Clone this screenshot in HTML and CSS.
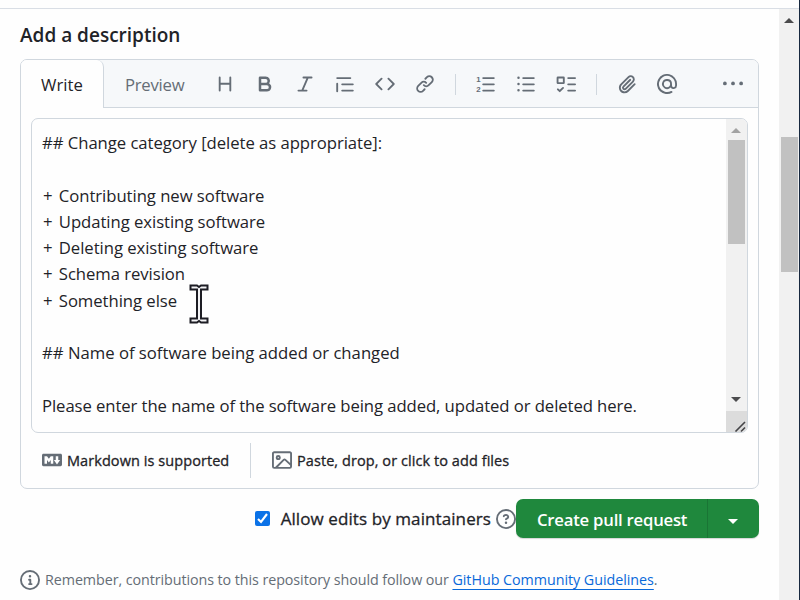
FILE: index.html
```html
<!DOCTYPE html>
<html lang="en">
<head>
<meta charset="utf-8">
<title>Open a pull request</title>
<link rel="stylesheet" href="styles.css">
</head>
<body>
<div class="page">
  <main class="content">
    <h3 class="title"><span>Add a description</span></h3>
    <section class="editor">
      <div class="tabbar">
        <div class="tab tab-active"><span class="t-write">Write</span></div>
        <div class="tab tab-preview"><span class="t-preview">Preview</span></div>
        <div class="tools">
          <svg class="ico" viewBox="0 0 16 16"><path d="M3.75 2a.75.75 0 0 1 .75.75V7h7V2.75a.75.75 0 0 1 1.5 0v10.5a.75.75 0 0 1-1.5 0V8.5h-7v4.75a.75.75 0 0 1-1.5 0V2.75A.75.75 0 0 1 3.75 2Z"/></svg>
          <svg class="ico" viewBox="0 0 16 16"><path d="M4 2h4.5a3.501 3.501 0 0 1 2.852 5.53A3.499 3.499 0 0 1 9.5 14H4a1 1 0 0 1-1-1V3a1 1 0 0 1 1-1Zm1 7v3h4.5a1.5 1.5 0 0 0 0-3Zm3.5-2a1.5 1.5 0 0 0 0-3H5v3Z"/></svg>
          <svg class="ico" viewBox="0 0 16 16"><path d="M6 2.75A.75.75 0 0 1 6.75 2h6.5a.75.75 0 0 1 0 1.5h-2.505l-3.858 9H9.25a.75.75 0 0 1 0 1.5h-6.5a.75.75 0 0 1 0-1.5h2.505l3.858-9H6.75A.75.75 0 0 1 6 2.75Z"/></svg>
          <svg class="ico" viewBox="0 0 16 16"><path d="M1.75 2.5h10.5a.75.75 0 0 1 0 1.5H1.75a.75.75 0 0 1 0-1.5Zm4 5h8.5a.75.75 0 0 1 0 1.5h-8.5a.75.75 0 0 1 0-1.5Zm0 5h8.5a.75.75 0 0 1 0 1.5h-8.5a.75.75 0 0 1 0-1.5ZM2.5 7.75v6a.75.75 0 0 1-1.5 0v-6a.75.75 0 0 1 1.5 0Z"/></svg>
          <svg class="ico" viewBox="0 0 16 16"><path d="m11.28 3.22 4.25 4.25a.75.75 0 0 1 0 1.06l-4.25 4.25a.749.749 0 0 1-1.275-.326.749.749 0 0 1 .215-.734L13.94 8l-3.72-3.72a.749.749 0 0 1 .326-1.275.749.749 0 0 1 .734.215Zm-6.56 0a.751.751 0 0 1 1.042.018.751.751 0 0 1 .018 1.042L2.06 8l3.72 3.72a.749.749 0 0 1-.326 1.275.749.749 0 0 1-.734-.215L.47 8.53a.75.75 0 0 1 0-1.06Z"/></svg>
          <svg class="ico" viewBox="0 0 16 16"><path d="m7.775 3.275 1.25-1.25a3.5 3.5 0 1 1 4.95 4.95l-2.5 2.5a3.5 3.5 0 0 1-4.95 0 .751.751 0 0 1 .018-1.042.751.751 0 0 1 1.042-.018 1.998 1.998 0 0 0 2.83 0l2.5-2.5a2.002 2.002 0 0 0-2.83-2.83l-1.25 1.25a.751.751 0 0 1-1.042-.018.751.751 0 0 1-.018-1.042Zm-4.69 9.64a1.998 1.998 0 0 0 2.83 0l1.25-1.25a.751.751 0 0 1 1.042.018.751.751 0 0 1 .018 1.042l-1.25 1.25a3.5 3.5 0 1 1-4.95-4.95l2.5-2.5a3.5 3.5 0 0 1 4.95 0 .751.751 0 0 1-.018 1.042.751.751 0 0 1-1.042.018 1.998 1.998 0 0 0-2.83 0l-2.5 2.5a1.998 1.998 0 0 0 0 2.83Z"/></svg>
          <i class="sep"></i>
          <svg class="ico" viewBox="0 0 16 16"><path d="M5.75 2.5h8.5a.75.75 0 0 1 0 1.5h-8.5a.75.75 0 0 1 0-1.5Zm0 5h8.5a.75.75 0 0 1 0 1.5h-8.5a.75.75 0 0 1 0-1.5Zm0 5h8.5a.75.75 0 0 1 0 1.5h-8.5a.75.75 0 0 1 0-1.5Z"/><text class="num" x="0.2" y="6.4">1</text><text class="num" x="0.2" y="14.2">2</text></svg>
          <svg class="ico" viewBox="0 0 16 16"><path d="M5.75 2.5h8.5a.75.75 0 0 1 0 1.5h-8.5a.75.75 0 0 1 0-1.5Zm0 5h8.5a.75.75 0 0 1 0 1.5h-8.5a.75.75 0 0 1 0-1.5Zm0 5h8.5a.75.75 0 0 1 0 1.5h-8.5a.75.75 0 0 1 0-1.5ZM2 14a1 1 0 1 1 0-2 1 1 0 0 1 0 2Zm1-6a1 1 0 1 1-2 0 1 1 0 0 1 2 0ZM2 4a1 1 0 1 1 0-2 1 1 0 0 1 0 2Z"/></svg>
          <svg class="ico" viewBox="0 0 16 16"><path fill-rule="evenodd" d="M1.5 2h4.5a1 1 0 0 1 1 1v4a1 1 0 0 1-1 1H1.5a1 1 0 0 1-1-1V3a1 1 0 0 1 1-1Zm.5 1.5v3h3.5v-3ZM6.155 10.595a.75.75 0 0 1 0 1.06L3.53 14.28a.75.75 0 0 1-1.06 0l-1.5-1.5a.749.749 0 0 1 .326-1.275.749.749 0 0 1 .734.215l.97.97 2.095-2.095a.75.75 0 0 1 1.06 0ZM9.75 2.5h5.5a.75.75 0 0 1 0 1.5h-5.5a.75.75 0 0 1 0-1.5Zm0 5h5.5a.75.75 0 0 1 0 1.5h-5.5a.75.75 0 0 1 0-1.5Zm0 5h5.5a.75.75 0 0 1 0 1.5h-5.5a.75.75 0 0 1 0-1.5Z"/></svg>
          <i class="sep"></i>
          <svg class="ico" viewBox="0 0 16 16"><path d="M12.212 3.02a1.753 1.753 0 0 0-2.478.003l-5.83 5.83a3.007 3.007 0 0 0-.88 2.127c0 .795.315 1.551.88 2.116.567.567 1.333.89 2.126.89.79 0 1.548-.321 2.116-.89l5.48-5.48a.75.75 0 0 1 1.061 1.06l-5.48 5.48a4.492 4.492 0 0 1-3.177 1.33c-1.2 0-2.345-.487-3.187-1.33a4.483 4.483 0 0 1-1.32-3.177c0-1.195.475-2.341 1.32-3.186l5.83-5.83a3.25 3.25 0 0 1 5.553 2.297c0 .863-.343 1.691-.953 2.301L7.439 12.39c-.375.377-.884.59-1.416.593a1.998 1.998 0 0 1-1.412-.593 1.992 1.992 0 0 1 0-2.828l5.48-5.48a.751.751 0 0 1 1.042.018.751.751 0 0 1 .018 1.042l-5.48 5.48a.492.492 0 0 0 0 .707.499.499 0 0 0 .352.154.51.51 0 0 0 .356-.154l5.833-5.827a1.755 1.755 0 0 0 0-2.481Z"/></svg>
          <svg class="ico" viewBox="0 0 16 16"><path d="M4.75 2.37a6.501 6.501 0 0 0 6.5 11.26.75.75 0 0 1 .75 1.298A7.999 7.999 0 0 1 .989 4.148 8 8 0 0 1 16 7.75v1.5a2.75 2.75 0 0 1-5.072 1.475 3.999 3.999 0 0 1-6.65-4.19A4 4 0 0 1 12 8v1.25a1.25 1.25 0 0 0 2.5 0V7.867a6.5 6.5 0 0 0-9.75-5.496ZM10.5 8a2.5 2.5 0 1 0-5 0 2.5 2.5 0 0 0 5 0Z"/></svg>
          <svg class="ico more" viewBox="0 0 16 16"><circle cx="1.5" cy="7.5" r="1.5"/><circle cx="8" cy="7.5" r="1.5"/><circle cx="14.5" cy="7.5" r="1.5"/></svg>
        </div>
      </div>
      <div class="textbox">
        <div class="lines">
          <p><span class="l1">## Change category [delete as appropriate]:</span></p>
          <p></p>
          <p><span class="item"><b>+</b> Contributing new software</span></p>
          <p><span class="item"><b>+</b> Updating existing software</span></p>
          <p><span class="item"><b>+</b> Deleting existing software</span></p>
          <p><span class="item"><b>+</b> Schema revision</span></p>
          <p><span class="item"><b>+</b> Something else</span></p>
          <p></p>
          <p><span class="l7">## Name of software being added or changed</span></p>
          <p></p>
          <p><span class="l8">Please enter the name of the software being added, updated or deleted here.</span></p>
        </div>
        <div class="scroll">
          <svg class="arrow" viewBox="0 0 10 5"><path fill="#a2a2a2" d="M0 5 5 0l5 5Z"/></svg>
          <div class="thumb"></div>
          <svg class="arrow" viewBox="0 0 10 5"><path fill="#4c4c4e" d="M0 0h10L5 5Z"/></svg>
          <div class="corner"><svg viewBox="0 0 12 12"><path d="m1.500 11.500 9.500-9.500M7 11.500l4-4" stroke="#454548" stroke-width="1.600" fill="none"/></svg></div>
        </div>
      </div>
      <div class="helpers">
        <div class="helper helper-md">
          <svg class="ico" viewBox="0 0 16 16"><path d="M14.850 3c.63 0 1.150.52 1.140 1.150v7.700c0 .63-.51 1.150-1.150 1.150H1.150C.52 13 0 12.480 0 11.840V4.150C0 3.520.52 3 1.150 3ZM9 11V5H7L5.500 7 4 5H2v6h2V8l1.500 1.920L7 8v3Zm2.990.5L14.500 8H13V5h-2v3H9.500Z"/></svg>
          <span class="t-md">Markdown is supported</span>
        </div>
        <div class="helper">
          <svg class="ico" viewBox="0 0 16 16"><path d="M16 13.250A1.750 1.750 0 0 1 14.250 15H1.750A1.750 1.750 0 0 1 0 13.250V2.750C0 1.784.784 1 1.750 1h12.500c.966 0 1.750.784 1.750 1.750ZM1.750 2.500a.25.25 0 0 0-.25.25v10.500c0 .138.112.25.25.25h.94l.03-.03 6.077-6.078a1.750 1.750 0 0 1 2.412-.06L14.500 10.310V2.750a.25.25 0 0 0-.25-.25Zm12.500 11a.25.25 0 0 0 .25-.25v-.917l-4.298-3.889a.25.25 0 0 0-.344.009L4.810 13.500ZM7 6a2 2 0 1 1-3.999.001A2 2 0 0 1 7 6ZM5.500 6a.5.5 0 1 0-1 0 .5.5 0 0 0 1 0Z"/></svg>
          <span class="t-paste">Paste, drop, or click to add files</span>
        </div>
      </div>
    </section>
    <div class="actions">
      <span class="check"><svg viewBox="0 0 15 15"><path d="m3 8 3 3 6-8" fill="none" stroke="#fff" stroke-width="2.100"/></svg></span>
      <span class="t-allow">Allow edits by maintainers</span>
      <svg class="ico" viewBox="0 0 16 16"><path d="M0 8a8 8 0 1 1 16 0A8 8 0 0 1 0 8Zm8-6.500a6.500 6.500 0 1 0 0 13 6.500 6.500 0 0 0 0-13ZM6.920 6.085h.001a.749.749 0 1 1-1.342-.67c.169-.339.436-.701.849-.977C6.845 4.160 7.369 4 8 4a2.756 2.756 0 0 1 1.637.525c.503.377.863.965.863 1.725 0 .448-.115.83-.329 1.150-.205.307-.47.513-.692.662-.109.072-.22.138-.313.195l-.006.004a6.240 6.240 0 0 0-.26.16.952.952 0 0 0-.276.245.75.75 0 0 1-1.248-.832c.184-.264.42-.489.692-.661.103-.067.207-.132.313-.195l.007-.004c.1-.061.182-.11.258-.161a.969.969 0 0 0 .277-.245C8.960 6.514 9 6.427 9 6.250a.612.612 0 0 0-.262-.525A1.270 1.270 0 0 0 8 5.500c-.369 0-.595.09-.74.187a1.010 1.010 0 0 0-.34.398ZM9 11a1 1 0 1 1-2 0 1 1 0 0 1 2 0Z"/></svg>
      <div class="btn">
        <div class="btn-main"><span class="t-create">Create pull request</span></div>
        <div class="btn-drop"><svg viewBox="0 0 10 5"><path fill="#fff" d="M0 0h10L5 5Z"/></svg></div>
      </div>
    </div>
    <div class="note">
      <svg class="ico" viewBox="0 0 16 16"><path d="M0 8a8 8 0 1 1 16 0A8 8 0 0 1 0 8Zm8-6.500a6.500 6.500 0 1 0 0 13 6.500 6.500 0 0 0 0-13ZM6.500 7.750A.75.75 0 0 1 7.250 7h1a.75.75 0 0 1 .75.75v2.750h.25a.75.75 0 0 1 0 1.500h-2a.75.75 0 0 1 0-1.500h.25v-2h-.25a.75.75 0 0 1-.75-.75ZM8 6a1 1 0 1 1 0-2 1 1 0 0 1 0 2Z"/></svg>
      <span class="note-text"><span class="t-note">Remember, contributions to this repository should follow our </span><a class="t-link">GitHub Community Guidelines</a>.</span>
    </div>
  </main>
  <aside class="pagescroll">
    <svg class="arrow" viewBox="0 0 10 5"><path fill="#4a4a4c" d="M0 5 5 0l5 5Z"/></svg>
    <div class="thumb"></div>
  </aside>
  <svg class="cursor" viewBox="0 0 20 40"><path fill="#f4f4f6" stroke="#1d1d24" stroke-width="2" d="M1.500 1.500h6.500l2 1.500 2-1.500h6.500v4H12v29h6.500v4H12L10 37l-2 1.500H1.500v-4H8v-29H1.500Z"/></svg>
</div>
</body>
</html>
```
FILE: styles.css
```css
* { box-sizing: border-box; }
body { margin: 0; background: #fefefe; color: #1f2328; font-family: "Open Sans", "Noto Sans", sans-serif; font-size: 16.7px; }
.page { position: relative; width: 800px; height: 600px; padding-top: 8px; display: flex; overflow: hidden; border-right: 1px solid #17283f; }
.page::before { content: ""; position: absolute; left: 0; right: 0; top: 8px; height: 1px; background: #d9dee5; }
span, a { white-space: pre; }
.content { width: 779px; padding: 0 20px; flex: none; }
.title { margin: 0; height: 51px; padding-top: 3px; display: flex; align-items: center; font-size: 19px; font-weight: 600; line-height: 48px; }
.ico { width: 20px; height: 20px; flex: none; fill: #656d76; display: block; }
.num { font: 700 6.300px "Liberation Sans", sans-serif; }
.editor { height: 430px; border: 1px solid #d0d7de; border-radius: 7px; display: flex; flex-direction: column; }
.tabbar { height: 48px; flex: none; display: flex; background: #f6f8fa; border-bottom: 1px solid #d0d7de; border-radius: 6px 6px 0 0; }
.tab { display: flex; align-items: center; height: 48px; }
.tab-active { width: 83px; padding: 0 0 0 20px; background: #fefefe; border-right: 1px solid #d0d7de; border-radius: 6px 7px 0 0; }
.tab-preview { width: 93px; padding-left: 21px; color: #656d76; letter-spacing: -0.25px; }
.tools { flex: 1; height: 48px; padding: 0 15px 0 18px; display: flex; align-items: center; gap: 20px; }
.sep { width: 1px; height: 21px; background: #d0d7de; }
.more { margin-left: auto; }
.textbox { height: 315px; margin: 10px 10px 0; flex: none; display: flex; border: 1px solid #d0d7de; border-radius: 7px; overflow: hidden; }
.lines { flex: 1; padding: 11px 0 0 10px; }
.lines p { margin: 0; height: 26.250px; line-height: 26.250px; }
.lines b { font-weight: inherit; margin: 0 2px 0 1px; }
.l1, .item { letter-spacing: -0.05px; }
.l8 { letter-spacing: -0.08px; }
.scroll { width: 21px; flex: none; background: #f1f1f1; display: flex; flex-direction: column; align-items: center; padding-top: 9px; }
.arrow { width: 10px; height: 5px; display: block; flex: none; }
.scroll .arrow { margin-right: 1px; }
.scroll .thumb { width: 17px; height: 104px; margin: 7px 0 153px; background: #c1c1c1; flex: none; }
.corner { width: 21px; height: 22px; margin-top: 9px; background: #dcdcdc; display: flex; align-items: flex-end; justify-content: flex-end; padding: 0 1px 1px 0; flex: none; }
.corner svg { width: 12px; height: 12px; }
.helpers { flex: 1; display: flex; align-items: center; padding: 0 0 1px 21px; font-size: 14.500px; letter-spacing: 0.07px; }
.helper span, .t-allow { -webkit-text-stroke: 0.3px currentColor; }
.helper { display: flex; align-items: center; gap: 5px; height: 35px; }
.helper-md { width: 209px; border-right: 1px solid #d0d7de; margin-right: 21px; }
.actions { height: 39px; margin-top: 10px; display: flex; align-items: center; justify-content: flex-end; }
.check { width: 15px; height: 15px; margin-right: 11px; border-radius: 2px; background: #0b72e7; display: flex; }
.t-allow { font-size: 17px; letter-spacing: 0.09px; }
.actions .ico { margin-left: 5px; }
.btn { width: 243px; height: 39px; display: flex; background: #1f883d; color: #fff; border-radius: 7px; box-shadow: 0 1px 1px #1f232830; font-weight: 600; }
.btn-main { width: 192px; padding-left: 21px; display: flex; align-items: center; border-right: 1px solid #1a7535; padding-top: 2px; letter-spacing: -0.22px; }
.btn-drop { flex: 1; display: flex; align-items: center; justify-content: center; padding: 5px 1px 0 0; }
.btn-drop svg { width: 10px; height: 5px; }
.note { height: 21px; margin-top: 31px; display: flex; align-items: center; gap: 5px; color: #656d76; font-size: 14.300px; letter-spacing: -0.07px; }
.t-link { color: #0969da; text-decoration: underline; text-underline-offset: 4px; text-decoration-thickness: 1px; letter-spacing: -0.04px; }
.pagescroll { width: 20px; margin-top: 1px; background: #f1f1f1; display: flex; flex-direction: column; align-items: center; padding-top: 9px; flex: none; }
.pagescroll .thumb { width: 17px; height: 135px; margin: 114px 1px 0 0; background: #c1c1c1; align-self: flex-end; }
.cursor { position: absolute; left: 189px; top: 284px; width: 20px; height: 40px; }
```
